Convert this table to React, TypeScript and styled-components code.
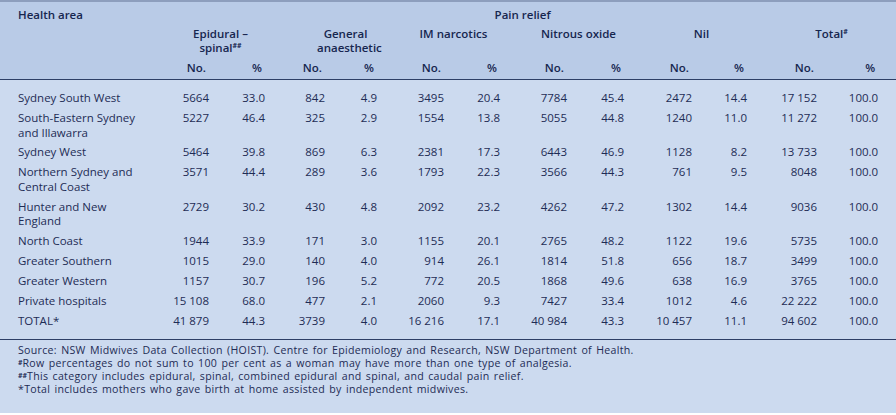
import React from "react";
import styled, { createGlobalStyle } from "styled-components";

const GlobalStyle = createGlobalStyle`
  html, body { margin: 0; padding: 0; background: #ffffff; }
  body { font-family: "Open Sans", Lato, "Liberation Sans", sans-serif; }
`;

const COLS = [155, 54, 56, 60, 52, 67, 56, 67, 57, 68, 55, 70, 61, 18];

const Panel = styled.div`
  width: 896px;
  height: 413px;
  box-sizing: border-box;
  background: #ccdaef;
  border-top: 2px solid #8d9ebd;
  color: #1e2c55;
  font-size: 11.5px;
  display: flex;
  flex-direction: column;
`;

const Table = styled.table`
  width: 896px;
  table-layout: fixed;
  border-collapse: collapse;
  border-spacing: 0;
`;

const Head = styled.thead`
  background: #b9cbe7;
  border-bottom: 1px solid #2d3f66;
  color: #16264f;
`;

const HeadCell = styled.th<{ $align?: string; $pl?: number; $pt?: number; $pb?: number }>`
  font-weight: 600;
  font-size: 11.5px;
  line-height: 14px;
  vertical-align: top;
  text-align: ${(p) => p.$align ?? "right"};
  padding: ${(p) => p.$pt ?? 0}px 3px ${(p) => p.$pb ?? 0}px ${(p) => p.$pl ?? 0}px;
`;

const Row = styled.tr``;

const Spacer = styled.tr<{ $h: number }>`
  height: ${(p) => p.$h}px;
`;

const AreaCell = styled.td`
  text-align: left;
  vertical-align: top;
  line-height: 14.5px;
  padding: 2.7px 0 2.7px 18px;
`;

const NumCell = styled.td`
  text-align: right;
  vertical-align: top;
  line-height: 14.5px;
  padding: 2.7px 0;
  white-space: nowrap;
`;

const Sup = styled.span`
  font-size: 7px;
  line-height: 8px;
  font-weight: 700;
  letter-spacing: 0;
  vertical-align: 2px;
`;

const HeadSup = styled(Sup)`
  vertical-align: 4px;
`;

const Notes = styled.div`
  border-top: 1px solid #2d3f66;
  margin-top: 8px;
  padding: 4px 0 0 18px;
  font-size: 10.6px;
  letter-spacing: 0.3px;
  word-spacing: 1.2px;
  line-height: 13px;
`;

const Note = styled.div``;

const groups: { label: React.ReactNode; pl: number }[] = [
  { label: (<>Epidural –<br />spinal<HeadSup>##</HeadSup></>), pl: 24 },
  { label: (<>General<br />anaesthetic</>), pl: 52 },
  { label: "IM narcotics", pl: 33 },
  { label: "Nitrous oxide", pl: 36 },
  { label: "Nil", pl: 35 },
  { label: (<>Total<HeadSup>#</HeadSup></>), pl: 41 },
];

const rows: [React.ReactNode, string[]][] = [
  ["Sydney South West", ["5664", "33.0", "842", "4.9", "3495", "20.4", "7784", "45.4", "2472", "14.4", "17 152", "100.0"]],
  [(<>South-Eastern Sydney<br />and Illawarra</>), ["5227", "46.4", "325", "2.9", "1554", "13.8", "5055", "44.8", "1240", "11.0", "11 272", "100.0"]],
  ["Sydney West", ["5464", "39.8", "869", "6.3", "2381", "17.3", "6443", "46.9", "1128", "8.2", "13 733", "100.0"]],
  [(<>Northern Sydney and<br />Central Coast</>), ["3571", "44.4", "289", "3.6", "1793", "22.3", "3566", "44.3", "761", "9.5", "8048", "100.0"]],
  [(<>Hunter and New<br />England</>), ["2729", "30.2", "430", "4.8", "2092", "23.2", "4262", "47.2", "1302", "14.4", "9036", "100.0"]],
  ["North Coast", ["1944", "33.9", "171", "3.0", "1155", "20.1", "2765", "48.2", "1122", "19.6", "5735", "100.0"]],
  ["Greater Southern", ["1015", "29.0", "140", "4.0", "914", "26.1", "1814", "51.8", "656", "18.7", "3499", "100.0"]],
  ["Greater Western", ["1157", "30.7", "196", "5.2", "772", "20.5", "1868", "49.6", "638", "16.9", "3765", "100.0"]],
  ["Private hospitals", ["15 108", "68.0", "477", "2.1", "2060", "9.3", "7427", "33.4", "1012", "4.6", "22 222", "100.0"]],
  ["TOTAL*", ["41 879", "44.3", "3739", "4.0", "16 216", "17.1", "40 984", "43.3", "10 457", "11.1", "94 602", "100.0"]],
];

export default function App() {
  return (
    <>
      <GlobalStyle />
      <Panel>
        <Table>
          <colgroup>
            {COLS.map((w, i) => (
              <col key={i} style={{ width: w }} />
            ))}
          </colgroup>
          <Head>
            <tr>
              <HeadCell $align="left" $pl={18} $pt={6}>Health area</HeadCell>
              <HeadCell colSpan={12} $align="center" $pl={15} $pt={6}>Pain relief</HeadCell>
              <HeadCell />
            </tr>
            <tr>
              <HeadCell />
              {groups.map((g, i) => (
                <HeadCell key={i} colSpan={2} $align="center" $pl={g.pl} $pt={5}>
                  {g.label}
                </HeadCell>
              ))}
              <HeadCell />
            </tr>
            <tr>
              <HeadCell />
              {groups.map((_, i) => (
                <React.Fragment key={i}>
                  <HeadCell $pt={6} $pb={4}>No.</HeadCell>
                  <HeadCell $pt={6} $pb={4}>%</HeadCell>
                </React.Fragment>
              ))}
              <HeadCell />
            </tr>
          </Head>
          <tbody>
            <Spacer $h={9} />
            {rows.map(([area, vals], i) => (
              <Row key={i}>
                <AreaCell>{area}</AreaCell>
                {vals.map((v, j) => (
                  <NumCell key={j}>{v}</NumCell>
                ))}
                <NumCell />
              </Row>
            ))}
          </tbody>
        </Table>
        <Notes>
          <Note>Source: NSW Midwives Data Collection (HOIST). Centre for Epidemiology and Research, NSW Department of Health.</Note>
          <Note><Sup>#</Sup>Row percentages do not sum to 100 per cent as a woman may have more than one type of analgesia.</Note>
          <Note><Sup>##</Sup>This category includes epidural, spinal, combined epidural and spinal, and caudal pain relief.</Note>
          <Note>*Total includes mothers who gave birth at home assisted by independent midwives.</Note>
        </Notes>
      </Panel>
    </>
  );
}
